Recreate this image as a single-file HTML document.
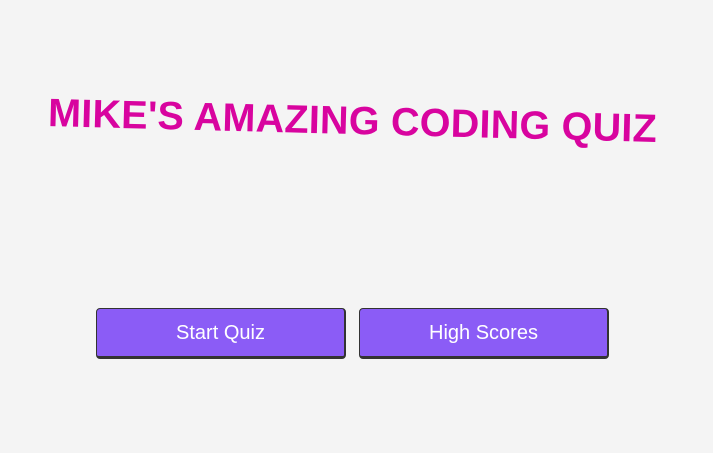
<!DOCTYPE html>
<html><head><style>
body{margin:0;width:713px;height:453px;background:#f4f4f4;font-family:"Liberation Sans",sans-serif;position:relative;overflow:hidden}
h1{position:absolute;left:-4px;width:713px;top:99px;margin:0;text-align:center;font-size:39.6px;font-weight:bold;color:#d8049f;transform:rotate(1.5deg);white-space:nowrap;letter-spacing:0.2px}
.b{position:absolute;top:308px;width:247px;height:47px;background:#8b5cf6;border:1px solid #333;border-right-width:2px;border-bottom-width:3px;border-radius:4px;color:#fff;font-size:20px;text-align:center;line-height:49px}
</style></head><body>
<h1>MIKE'S AMAZING CODING QUIZ</h1>
<div class="b" style="left:96px">Start Quiz</div>
<div class="b" style="left:359px">High Scores</div>
</body></html>
